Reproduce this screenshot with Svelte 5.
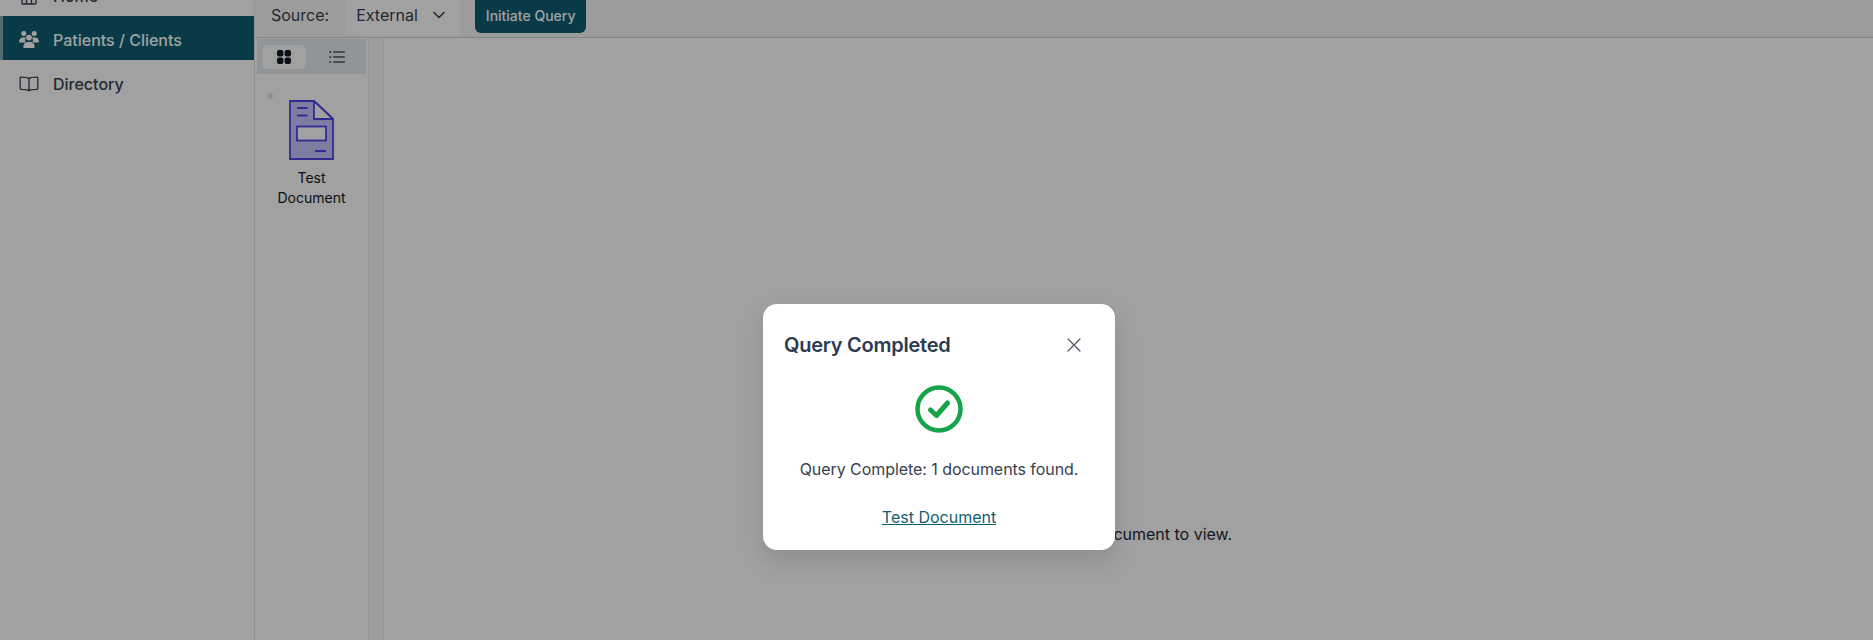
<script>
  const navItems = [
    { label: 'Home', icon: 'home' },
    { label: 'Patients / Clients', icon: 'users', active: true },
    { label: 'Directory', icon: 'book' }
  ];
</script>

<div class="page">
  <aside class="sidebar">
    {#each navItems as item}
      <div class="nav-item" class:active={item.active}>
        {#if item.icon === 'home'}
          <svg class="nav-icon" viewBox="0 0 20 20" fill="none" stroke="currentColor" stroke-width="1.4">
            <path d="M3 9h14v8a1 1 0 0 1-1 1H4a1 1 0 0 1-1-1zM7.500 9v9M12.500 9v9M2 9l8-6 8 6" />
          </svg>
        {:else if item.icon === 'users'}
          <svg class="nav-icon" viewBox="0 0 20 20" fill="currentColor">
            <circle cx="4.8" cy="3.6" r="2.5" />
            <circle cx="15.2" cy="3.6" r="2.5" />
            <circle cx="10" cy="7.6" r="2.9" />
            <path d="M0 12c0-2.600 1.700-4.600 3.800-4.600h2.200c.4 0 .7.1 1 .2-.6.7-.9 1.600-.9 2.700 0 .8.200 1.500.5 2.100H.9c-.5 0-.9-.1-.9-.4zM20 12c0-2.600-1.700-4.600-3.800-4.600h-2.200c-.4 0-.7.1-1 .2.600.7.900 1.600.900 2.700 0 .8-.2 1.500-.5 2.100h5.700c.5 0 .9-.1.900-.4z" />
            <path d="M4.300 17c0-3 1.800-5 3.900-5h3.600c2.100 0 3.900 2 3.900 5 0 .5-.3.900-.8.900H5.100c-.5 0-.8-.4-.8-.9z" />
          </svg>
        {:else}
          <svg class="nav-icon" viewBox="0 0 20 20" fill="none" stroke="currentColor" stroke-width="1.3" stroke-linejoin="round">
            <path d="M10 4.600C8.600 3.600 7 3.200 2 3.200a.8.8 0 0 0-.8.8v10.600c0 .4.400.8.800.8 4.600 0 6.600.3 8 1.400 1.400-1.100 3.400-1.400 8-1.400.4 0 .8-.4.8-.8V4c0-.4-.4-.8-.8-.8-5 0-6.600.4-8 1.400zM10 4.600v12.200" />
          </svg>
        {/if}
        <span>{item.label}</span>
      </div>
    {/each}
  </aside>

  <div class="workspace">
    <header class="toolbar">
      <span class="source-label">Source:</span>
      <div class="source-select">
        <span>External</span>
        <svg width="14" height="14" viewBox="0 0 14 14" fill="none" stroke="currentColor" stroke-width="1.6" stroke-linecap="round" stroke-linejoin="round">
          <path d="M2 4.500 7 9.500l5-5" />
        </svg>
      </div>
      <button class="query-btn">Initiate Query</button>
    </header>

    <div class="content">
      <section class="docs">
        <div class="view-toggle">
          <div class="toggle-btn selected">
            <svg width="16" height="16" viewBox="0 0 16 16" fill="#111827">
              <rect x="1" y="1" width="6.400" height="6.400" rx="2" />
              <rect x="8.600" y="1" width="6.400" height="6.400" rx="2" />
              <rect x="1" y="8.600" width="6.400" height="6.400" rx="2" />
              <rect x="8.600" y="8.600" width="6.400" height="6.400" rx="2" />
            </svg>
          </div>
          <div class="toggle-btn">
            <svg width="16" height="14" viewBox="0 0 16 14" fill="#4b5563">
              <circle cx="1.200" cy="2" r="1.100" />
              <circle cx="1.200" cy="7" r="1.100" />
              <circle cx="1.200" cy="12" r="1.100" />
              <rect x="4" y="1.200" width="12" height="1.500" rx=".7" />
              <rect x="4" y="6.200" width="12" height="1.500" rx=".7" />
              <rect x="4" y="11.200" width="12" height="1.500" rx=".7" />
            </svg>
          </div>
        </div>
        <div class="doc-card">
          <span class="doc-dot"></span>
          <svg class="doc-icon" width="45" height="60" viewBox="0 0 45 60">
            <path d="M1 1h24L44 19v40H1z" fill="#c6c4ff" stroke="#4f46e5" stroke-width="1.800" />
            <path d="M25 1 44 19H25z" fill="#fff" stroke="#4f46e5" stroke-width="1.800" stroke-linejoin="round" />
            <path d="M8 8h10.500M8 15.500h10.500M26 51h11" stroke="#4f46e5" stroke-width="1.800" />
            <rect x="8" y="26.500" width="29" height="14" fill="#fff" stroke="#4f46e5" stroke-width="1.800" />
          </svg>
          <div class="doc-name">Test Document</div>
        </div>
      </section>
      <div class="gutter"></div>
      <main class="viewer">
        <p>Select a document to view.</p>
      </main>
    </div>
  </div>

  <div class="overlay">
    <div class="modal">
      <div class="modal-head">
        <h2>Query Completed</h2>
        <svg class="close" width="16" height="16" viewBox="0 0 16 16" fill="none" stroke="#4b5563" stroke-width="1.200" stroke-linecap="round">
          <path d="M2 2l12 12M14 2 2 14" />
        </svg>
      </div>
      <svg class="check" width="48" height="48" viewBox="0 0 48 48" fill="none" stroke="#16a34a">
        <circle cx="24" cy="24" r="21.500" stroke-width="4.500" />
        <path d="M15.500 25l6 5.500L32.500 18" stroke-width="5" stroke-linecap="round" stroke-linejoin="round" />
      </svg>
      <p class="result">Query Complete: 1 documents found.</p>
      <a class="doc-link" href="#top">Test Document</a>
    </div>
  </div>
</div>

<style>
  :global(body) {
    margin: 0;
    overflow: hidden;
  }

  .page {
    position: relative;
    display: flex;
    height: 640px;
    overflow: hidden;
    background: #fff;
    color: #1f2937;
    font-family: Inter, 'Liberation Sans', sans-serif;
    font-size: 16px;
  }

  .sidebar {
    width: 254px;
    flex-shrink: 0;
    margin-top: -28px;
    border-right: 1px solid #e5e7eb;
  }

  .nav-item {
    display: flex;
    align-items: center;
    gap: 14px;
    box-sizing: border-box;
    height: 44px;
    padding: 3px 0 0 19px;
    font-weight: 500;
    color: #374151;
  }

  .nav-item.active {
    border-left: 3px solid #81abb2;
    padding-left: 16px;
    background: #0e5e71;
    color: #fff;
  }

  .nav-icon {
    width: 20px;
    height: 20px;
    flex-shrink: 0;
  }

  .workspace {
    flex: 1;
    display: flex;
    flex-direction: column;
    min-width: 0;
  }

  .toolbar {
    display: flex;
    align-items: flex-start;
    height: 37px;
    flex-shrink: 0;
    border-bottom: 1px solid #d1d5db;
    background: #f8f8f8;
  }

  .source-label {
    margin: 5px 16px 0 16px;
    line-height: 20px;
    color: #374151;
  }

  .source-select {
    display: flex;
    align-items: center;
    justify-content: space-between;
    box-sizing: border-box;
    width: 115px;
    height: 35px;
    padding: 0 14px 5px 11px;
    background: #fff;
    color: #374151;
    white-space: nowrap;
  }

  .query-btn {
    box-sizing: border-box;
    width: 111px;
    height: 33px;
    margin-left: 15px;
    padding: 0 0 2px;
    border: 0;
    border-radius: 0 0 6px 6px;
    background: #0e5e71;
    color: #fff;
    font: 500 14px Inter, 'Liberation Sans', sans-serif;
  }

  .content {
    flex: 1;
    display: flex;
    min-height: 0;
  }

  .docs {
    width: 113px;
    flex-shrink: 0;
    border-right: 1px solid #e5e7eb;
  }

  .view-toggle {
    display: flex;
    align-items: center;
    gap: 9px;
    box-sizing: border-box;
    width: 109px;
    height: 35px;
    margin: 1px 0 0 2px;
    padding: 0 5px;
    background: #e6ecf1;
  }

  .toggle-btn {
    display: flex;
    align-items: center;
    justify-content: center;
    flex-shrink: 0;
    width: 44px;
    height: 24px;
    border-radius: 6px;
  }

  .toggle-btn.selected {
    background: #fff;
  }

  .doc-card {
    position: relative;
    display: flex;
    flex-direction: column;
    align-items: center;
    padding-top: 26px;
    width: 113px;
  }

  .doc-dot {
    position: absolute;
    left: 12px;
    top: 19px;
    width: 6px;
    height: 6px;
    border-radius: 50%;
    background: #e2e4e8;
  }

  .doc-name {
    width: 80px;
    margin-top: 8px;
    text-align: center;
    font-size: 14px;
    line-height: 20px;
    color: #111827;
  }

  .gutter {
    width: 14px;
    flex-shrink: 0;
    border-right: 1px solid #e5e7eb;
    background: #f9f9f9;
  }

  .viewer {
    flex: 1;
    display: flex;
    justify-content: center;
    padding-left: 4px;
    color: #1f2937;
  }

  .viewer p {
    margin: 486px 0 0;
    line-height: 20px;
  }

  .overlay {
    position: absolute;
    inset: 0;
    display: flex;
    align-items: flex-start;
    padding: 304px 0 0 763px;
    background: rgba(0, 0, 0, 0.37);
  }

  .modal {
    box-sizing: border-box;
    width: 352px;
    height: 246px;
    padding: 24px 20px 20px;
    border-radius: 14px;
    background: #fff;
    display: flex;
    flex-direction: column;
    align-items: center;
    box-shadow: 0 10px 25px rgba(0, 0, 0, 0.12);
  }

  .modal-head {
    display: flex;
    align-items: center;
    justify-content: space-between;
    width: 100%;
    height: 34px;
    margin-bottom: 23px;
  }

  .modal-head h2 {
    margin: 0 0 0 1px;
    font-size: 20px;
    font-weight: 600;
    letter-spacing: -0.25px;
    color: #2d3a4f;
  }

  .close {
    margin-right: 13px;
  }

  .check {
    display: block;
  }

  .result {
    margin: 24px 0 0;
    line-height: 24px;
    letter-spacing: -0.06px;
    color: #374151;
  }

  .doc-link {
    margin-top: 24px;
    line-height: 24px;
    color: #0e5e71;
    text-decoration: underline;
  }
</style>
